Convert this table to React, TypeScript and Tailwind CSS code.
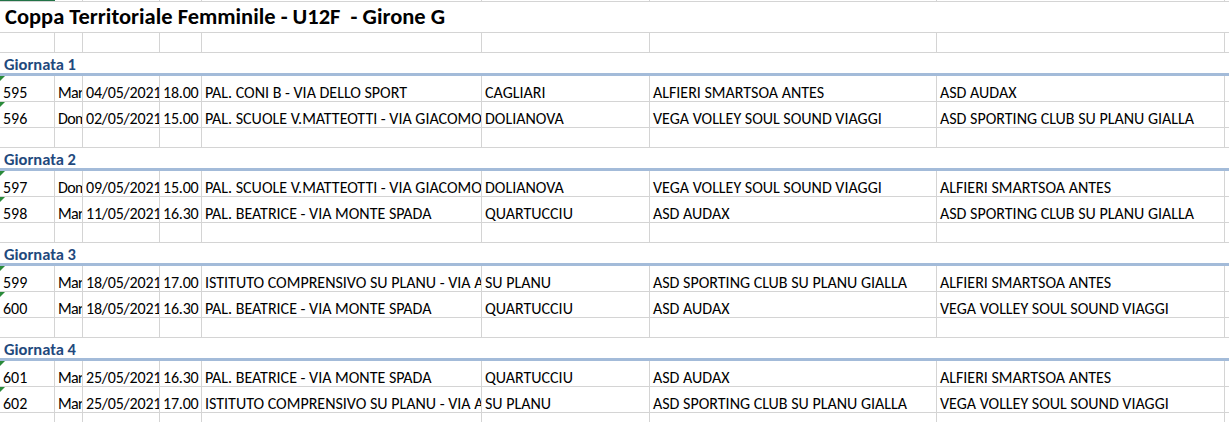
import React from 'react';

const cols = [55, 28, 77, 42, 280, 168, 287, 288];

type Match = {
  id: string;
  day: string;
  date: string;
  time: string;
  place: string;
  city: string;
  home: string;
  away: string;
};

const rounds: { name: string; matches: Match[] }[] = [
  {
    name: 'Giornata 1',
    matches: [
      { id: '595', day: 'Mar', date: '04/05/2021', time: '18.00', place: 'PAL. CONI B - VIA DELLO SPORT', city: 'CAGLIARI', home: 'ALFIERI SMARTSOA ANTES', away: 'ASD AUDAX' },
      { id: '596', day: 'Dom', date: '02/05/2021', time: '15.00', place: 'PAL. SCUOLE V.MATTEOTTI - VIA GIACOMO MATTEOTTI', city: 'DOLIANOVA', home: 'VEGA VOLLEY SOUL SOUND VIAGGI', away: 'ASD SPORTING CLUB SU PLANU GIALLA' },
    ],
  },
  {
    name: 'Giornata 2',
    matches: [
      { id: '597', day: 'Dom', date: '09/05/2021', time: '15.00', place: 'PAL. SCUOLE V.MATTEOTTI - VIA GIACOMO MATTEOTTI', city: 'DOLIANOVA', home: 'VEGA VOLLEY SOUL SOUND VIAGGI', away: 'ALFIERI SMARTSOA ANTES' },
      { id: '598', day: 'Mar', date: '11/05/2021', time: '16.30', place: 'PAL. BEATRICE - VIA MONTE SPADA', city: 'QUARTUCCIU', home: 'ASD AUDAX', away: 'ASD SPORTING CLUB SU PLANU GIALLA' },
    ],
  },
  {
    name: 'Giornata 3',
    matches: [
      { id: '599', day: 'Mar', date: '18/05/2021', time: '17.00', place: 'ISTITUTO COMPRENSIVO SU PLANU - VIA ARGENTINA', city: 'SU PLANU', home: 'ASD SPORTING CLUB SU PLANU GIALLA', away: 'ALFIERI SMARTSOA ANTES' },
      { id: '600', day: 'Mar', date: '18/05/2021', time: '16.30', place: 'PAL. BEATRICE - VIA MONTE SPADA', city: 'QUARTUCCIU', home: 'ASD AUDAX', away: 'VEGA VOLLEY SOUL SOUND VIAGGI' },
    ],
  },
  {
    name: 'Giornata 4',
    matches: [
      { id: '601', day: 'Mar', date: '25/05/2021', time: '16.30', place: 'PAL. BEATRICE - VIA MONTE SPADA', city: 'QUARTUCCIU', home: 'ASD AUDAX', away: 'ALFIERI SMARTSOA ANTES' },
      { id: '602', day: 'Mar', date: '25/05/2021', time: '17.00', place: 'ISTITUTO COMPRENSIVO SU PLANU - VIA ARGENTINA', city: 'SU PLANU', home: 'ASD SPORTING CLUB SU PLANU GIALLA', away: 'VEGA VOLLEY SOUL SOUND VIAGGI' },
    ],
  },
];

// per-column letter spacing tweaks so the fallback font clips like Calibri
const tracking = ['', 'tracking-[-0.7px]', 'tracking-[-0.2px]', 'tracking-[-0.2px]', '', '', '', ''];

const Cell: React.FC<{ w: number; children?: React.ReactNode; flag?: boolean; extra?: string }> = ({ w, children, flag, extra }) => (
  <div
    className={`relative shrink-0 h-full border-r border-[#d4d4d4] flex items-end pl-[3px] pb-0 overflow-hidden whitespace-nowrap leading-none text-[16px] ${extra ?? ''}`}
    style={{ width: w }}
  >
    {flag && <span className="absolute left-0 top-0 w-0 h-0 border-t-[5px] border-r-[5px] border-t-[#2a8a3a] border-r-transparent" />}
    {children}
  </div>
);

const GridRow: React.FC<{ h: string; values?: string[]; flag?: boolean }> = ({ h, values, flag }) => (
  <div className={`flex border-b border-[#d4d4d4] ${h}`}>
    {cols.map((w, i) => (
      <Cell key={i} w={w} flag={flag && i === 0} extra={tracking[i]}>
        {values ? values[i] : null}
      </Cell>
    ))}
    <div className="flex-1" />
  </div>
);

const App: React.FC = () => {
  return (
    <div className="w-[1229px] h-[422px] overflow-hidden bg-white text-black font-['Carlito','Lato','Liberation_Sans',sans-serif]">
      {/* row above, cut off */}
      <div className="relative flex h-[2px] border-b border-[#d4d4d4]">
        {cols.map((w, i) => (
          <div key={i} className="shrink-0 h-full border-r border-[#d4d4d4]" style={{ width: w }} />
        ))}
        <span className="absolute left-0 top-0 w-[55px] h-[1px] bg-[#217346]" />
      </div>

      {/* title */}
      <div className="h-[31px] border-b border-[#d4d4d4] flex items-end pl-[5px] pb-[4px] whitespace-pre">
        <span className="text-[22.5px] font-bold leading-none">Coppa Territoriale Femminile - U12F  - Girone G</span>
      </div>

      {rounds.map(r => (
        <React.Fragment key={r.name}>
          <GridRow h="h-[20px]" />
          <div className="h-[23px] flex border-b-[3px] border-[#a3bbd9]">
            <div className="flex items-end pl-[4px] pb-[1px] w-[1225px]">
              <span className="text-[16.5px] font-bold text-[#1f497d] leading-none">{r.name}</span>
            </div>
          </div>
          {r.matches.map(m => (
            <GridRow
              key={m.id}
              h="h-[26px]"
              flag
              values={[m.id, m.day, m.date, m.time, m.place, m.city, m.home, m.away]}
            />
          ))}
        </React.Fragment>
      ))}
      <GridRow h="h-[20px]" />
    </div>
  );
};

export default App;
